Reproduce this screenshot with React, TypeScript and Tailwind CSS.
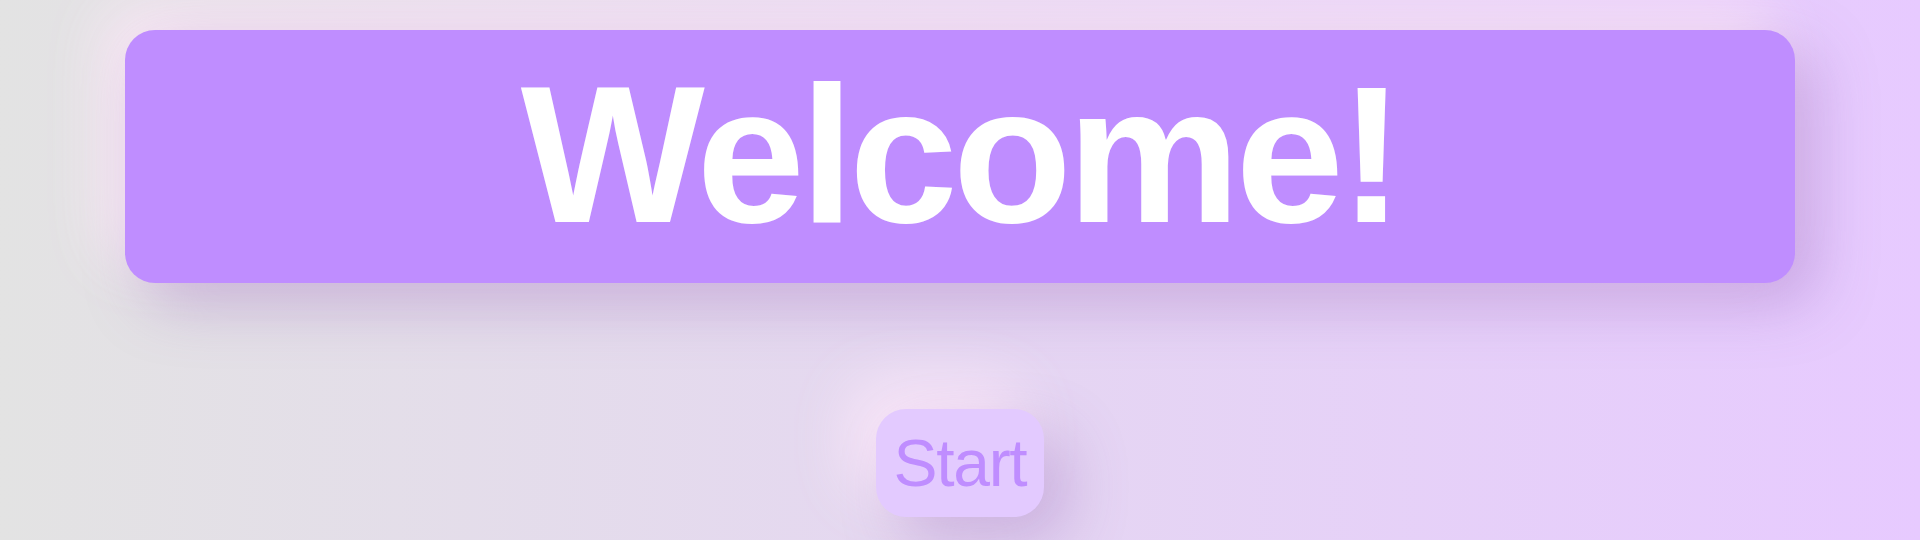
export default function App() {
  return (
    <div
      className="flex h-[540px] w-full flex-col items-center overflow-hidden bg-gradient-to-r from-[#e3e3e3] to-[#e7caff] px-[125px] pt-[30px]"
      style={{ fontFamily: '"Liberation Sans", Arial, sans-serif' }}
    >
      {/* Welcome banner */}
      <div className="flex h-[253px] w-full items-center justify-center rounded-[30px] bg-[#bf8dff] pb-[5px] shadow-[20px_20px_60px_rgba(140,90,180,0.35),-20px_-20px_60px_rgba(255,235,250,0.9)]">
        <h1 className="text-[195px] font-bold leading-none tracking-tight text-white">Welcome!</h1>
      </div>

      {/* Start button */}
      <button className="mt-[126px] flex h-[108px] w-[168px] items-center justify-center rounded-[30px] bg-[#e3caff] text-[66px] leading-none tracking-[-0.02em] text-[#bf8dff] shadow-[24px_24px_60px_rgba(140,90,180,0.3),-24px_-24px_60px_rgba(255,235,250,0.85)]">
        Start
      </button>
    </div>
  );
}
